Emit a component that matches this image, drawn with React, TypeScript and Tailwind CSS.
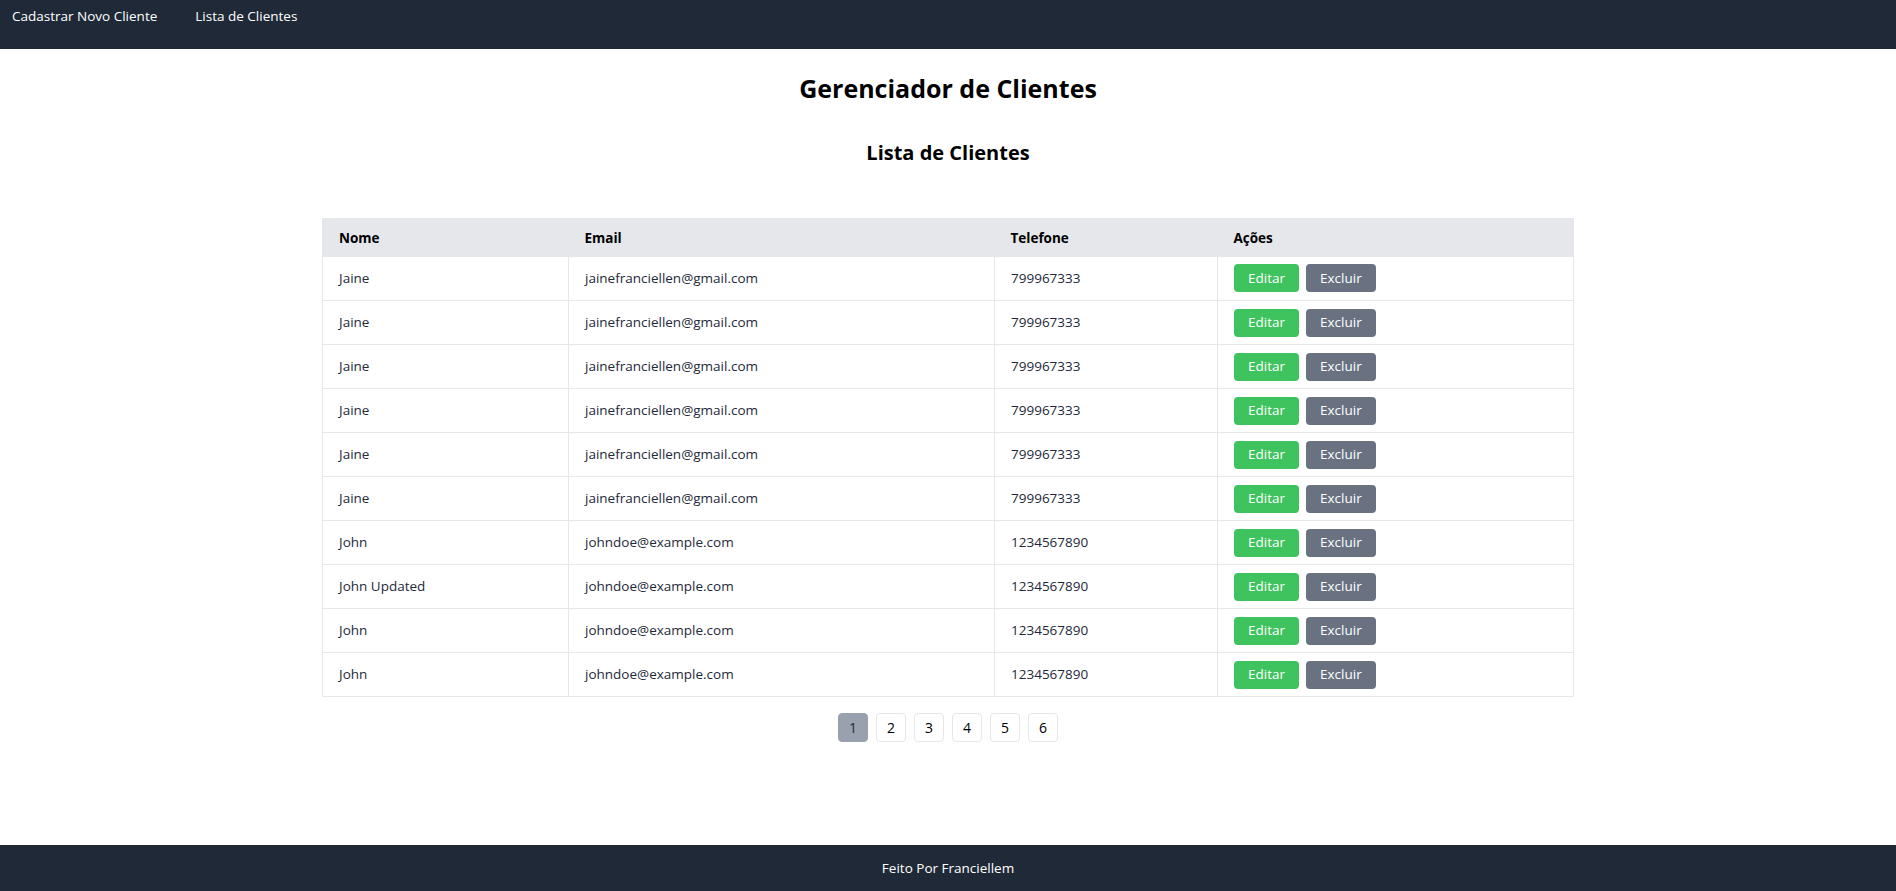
import React from 'react';

type Cliente = { nome: string; email: string; telefone: string };

const clientes: Cliente[] = [
  { nome: 'Jaine', email: 'jainefranciellen@gmail.com', telefone: '799967333' },
  { nome: 'Jaine', email: 'jainefranciellen@gmail.com', telefone: '799967333' },
  { nome: 'Jaine', email: 'jainefranciellen@gmail.com', telefone: '799967333' },
  { nome: 'Jaine', email: 'jainefranciellen@gmail.com', telefone: '799967333' },
  { nome: 'Jaine', email: 'jainefranciellen@gmail.com', telefone: '799967333' },
  { nome: 'Jaine', email: 'jainefranciellen@gmail.com', telefone: '799967333' },
  { nome: 'John', email: 'johndoe@example.com', telefone: '1234567890' },
  { nome: 'John Updated', email: 'johndoe@example.com', telefone: '1234567890' },
  { nome: 'John', email: 'johndoe@example.com', telefone: '1234567890' },
  { nome: 'John', email: 'johndoe@example.com', telefone: '1234567890' },
];

const pages = [1, 2, 3, 4, 5, 6];

const App: React.FC = () => {
  return (
    <div className="min-h-screen flex flex-col bg-white text-black font-['Open_Sans',sans-serif]">
      {/* Navbar */}
      <nav className="h-[49px] bg-[#1f2937] text-white text-[13.5px] flex items-start pl-3 pt-[6px]">
        <a href="#" className="mr-[38px]">Cadastrar Novo Cliente</a>
        <a href="#">Lista de Clientes</a>
      </nav>

      <main className="flex-1 px-4 pt-[23px]">
        <h1 className="text-[25px] leading-8 font-bold text-center">Gerenciador de Clientes</h1>
        <h2 className="mt-[35px] text-xl leading-7 font-bold text-center">Lista de Clientes</h2>

        <table className="mt-[51px] mx-auto w-[1252px] border-collapse border border-gray-200 text-[13.5px] text-left">
          <thead>
            <tr className="bg-gray-200">
              <th className="w-[246px] h-[38px] px-4 font-bold">Nome</th>
              <th className="w-[426px] px-4 font-bold">Email</th>
              <th className="w-[223px] px-4 font-bold">Telefone</th>
              <th className="px-4 font-bold">Ações</th>
            </tr>
          </thead>
          <tbody>
            {clientes.map((c, i) => (
              <tr key={i} className="border-b border-gray-200 text-gray-800">
                <td className="h-[44px] px-4 border-r border-gray-200">{c.nome}</td>
                <td className="px-4 border-r border-gray-200">{c.email}</td>
                <td className="px-4 border-r border-gray-200">{c.telefone}</td>
                <td className="px-4">
                  <button className="h-[28px] px-[14px] mr-[7px] rounded bg-[#3fc35f] text-white">Editar</button>
                  <button className="h-[28px] px-[14px] rounded bg-gray-500 text-white">Excluir</button>
                </td>
              </tr>
            ))}
          </tbody>
        </table>

        <div className="mt-4 flex justify-center gap-2 text-sm">
          {pages.map((p) => (
            <button
              key={p}
              className={
                p === 1
                  ? 'w-[30px] h-[29px] rounded border border-gray-400 bg-gray-400 text-gray-800'
                  : 'w-[30px] h-[29px] rounded border border-gray-200 bg-white text-black'
              }
            >
              {p}
            </button>
          ))}
        </div>
      </main>

      <footer className="h-[46px] bg-[#1f2937] text-white text-[13.5px] flex items-center justify-center">
        Feito Por Franciellem
      </footer>
    </div>
  );
};

export default App;
